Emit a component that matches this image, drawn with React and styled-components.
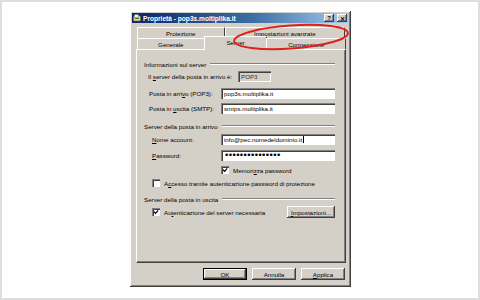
import React from "react";
import styled, { createGlobalStyle, css } from "styled-components";

const Global = createGlobalStyle`
  html, body { margin: 0; padding: 0; background: #fff; }
  body { width: 480px; height: 300px; overflow: hidden; }
`;

const Frame = styled.div`
  position: relative;
  box-sizing: border-box;
  width: 480px;
  height: 300px;
  border: 2px solid #dedede;
  background: #fff;
  display: flex;
  align-items: center;
  justify-content: center;
  font-family: "Liberation Sans", Arial, sans-serif;
  font-size: 6.2px;
  color: #000;
`;

const raised = css`
  box-shadow: inset -1px -1px 0 #404040, inset 1px 1px 0 #ffffff,
    inset -2px -2px 0 #808080;
`;

const sunken = css`
  box-shadow: inset 1px 1px 0 #808080, inset 2px 2px 0 #404040,
    inset -1px -1px 0 #ffffff;
`;

const Dialog = styled.div`
  box-sizing: border-box;
  width: 221px;
  height: 276px;
  margin-top: -2px;
  margin-left: 1px;
  padding: 2px;
  background: #d4d0c8;
  display: flex;
  flex-direction: column;
  ${raised}
`;

const TitleBar = styled.div`
  height: 10px;
  display: flex;
  align-items: center;
  padding: 0 2px 0 1px;
  background: linear-gradient(90deg, #0a246a 0%, #3a6ea5 55%, #a6caf0 100%);
  color: #fff;
  font-weight: bold;
  font-size: 6.6px;
  gap: 2px;
`;

const Title = styled.span`
  flex: 1;
  white-space: nowrap;
`;

const CaptionButton = styled.div`
  box-sizing: border-box;
  width: 10px;
  height: 8px;
  background: #d4d0c8;
  color: #000;
  display: flex;
  align-items: center;
  justify-content: center;
  font-size: 6px;
  font-weight: bold;
  margin-left: ${(p) => (p.$gap ? "1px" : "0")};
  ${raised}
`;

const Body = styled.div`
  flex: 1;
  display: flex;
  flex-direction: column;
  padding: 4px 3px 5px 4px;
`;

const TabRow = styled.div`
  display: flex;
  height: 11px;
  padding: 0 ${(p) => p.$pad || 0}px 0 1px;
  position: relative;
  z-index: ${(p) => (p.$front ? 2 : 1)};
`;

const Tab = styled.div`
  box-sizing: border-box;
  width: ${(p) => p.$w}px;
  display: flex;
  align-items: center;
  justify-content: center;
  background: #d4d0c8;
  border-top: 1px solid #fff;
  border-left: 1px solid #fff;
  border-right: 1px solid #404040;
  border-top-left-radius: 1px;
  border-top-right-radius: 1px;
  white-space: nowrap;
  ${(p) =>
    p.$selected &&
    css`
      margin-top: -2px;
      height: 14px;
      margin-left: -1px;
      margin-right: -1px;
      width: ${p.$w + 2}px;
      padding-bottom: 2px;
    `}
`;

const Panel = styled.div`
  box-sizing: border-box;
  height: 214px;
  border-top: 1px solid #fff;
  border-left: 1px solid #fff;
  border-right: 1px solid #404040;
  border-bottom: 1px solid #404040;
  box-shadow: inset -1px -1px 0 #808080;
  padding: 0 10px 0 7px;
  display: flex;
  flex-direction: column;
`;

const Row = styled.div`
  display: flex;
  align-items: center;
  height: ${(p) => p.$h || 12}px;
  margin-top: ${(p) => p.$mt || 0}px;
  padding-left: ${(p) => p.$indent || 0}px;
  white-space: nowrap;
`;

const GroupTitle = styled(Row)`
  &::after {
    content: "";
    flex: 1;
    margin-left: 4px;
    height: 0;
    border-top: 1px solid #808080;
    border-bottom: 1px solid #fff;
  }
`;

const Label = styled.span`
  width: ${(p) => p.$w}px;
  flex: none;
`;

const Field = styled.div`
  box-sizing: border-box;
  height: 11px;
  width: ${(p) => (p.$w ? `${p.$w}px` : "auto")};
  flex: ${(p) => (p.$w ? "none" : 1)};
  background: ${(p) => (p.$disabled ? "#d4d0c8" : "#fff")};
  padding: 0 3px;
  display: flex;
  align-items: center;
  color: ${(p) => (p.$disabled ? "#303030" : "#000")};
  ${sunken}
`;

const Dots = styled.span`
  font-family: "DejaVu Sans", sans-serif;
  font-size: 9px;
  letter-spacing: -1.6px;
  line-height: 1;
  margin-top: 1px;
`;

const Caret = styled.span`
  display: inline-block;
  width: 1px;
  height: 7px;
  background: #000;
  margin-left: 1px;
`;

const Box = styled.span`
  box-sizing: border-box;
  width: 8px;
  height: 8px;
  flex: none;
  background: #fff;
  margin-right: 4px;
  display: flex;
  align-items: center;
  justify-content: center;
  ${sunken}
`;

const PushButton = styled.div`
  box-sizing: border-box;
  width: ${(p) => p.$w || 44}px;
  height: ${(p) => p.$h || 12}px;
  background: #d4d0c8;
  display: flex;
  align-items: center;
  justify-content: center;
  ${raised}
  ${(p) =>
    p.$default &&
    css`
      border: 1px solid #000;
    `}
`;

const Spacer = styled.div`
  flex: 1;
`;

const ButtonBar = styled.div`
  display: flex;
  justify-content: flex-end;
  gap: 5px;
  margin-top: 5px;
  padding-right: 1px;
`;

const Ellipse = styled.svg`
  position: absolute;
  left: 228px;
  top: 20px;
  z-index: 10;
  overflow: visible;
  pointer-events: none;
`;

const Check = () => (
  <svg width="6" height="6" viewBox="0 0 7 7">
    <path d="M1 3 L3 5 L6 1.5" stroke="#000" strokeWidth="1.4" fill="none" />
  </svg>
);

const CheckBox = ({ checked, children }) => (
  <>
    <Box>{checked && <Check />}</Box>
    <span>{children}</span>
  </>
);

const AppIcon = () => (
  <svg width="8" height="8" viewBox="0 0 8 8">
    <rect x="0.5" y="2" width="7" height="5" fill="#e8d68a" stroke="#6b5a1e" strokeWidth="0.6" />
    <rect x="1.5" y="0.5" width="4" height="3" fill="#f4f4f4" stroke="#666" strokeWidth="0.5" />
    <rect x="2" y="4" width="4" height="1" fill="#3a7a3a" />
  </svg>
);

export default function App() {
  return (
    <>
      <Global />
      <Frame>
        <Dialog>
          <TitleBar>
            <AppIcon />
            <Title>Proprietà - pop3s.moltiplika.it</Title>
            <CaptionButton>?</CaptionButton>
            <CaptionButton $gap>✕</CaptionButton>
          </TitleBar>
          <Body>
            <TabRow $pad={1}>
              <Tab $w={88}>Protezione</Tab>
              <Tab $w={121}>Impostazioni avanzate</Tab>
            </TabRow>
            <TabRow $front>
              <Tab $w={68}>Generale</Tab>
              <Tab $w={62} $selected>
                Server
              </Tab>
              <Tab $w={80}>Connessione</Tab>
            </TabRow>
            <Panel>
              <GroupTitle $h={10} $mt={9}>
                Informazioni sul server
              </GroupTitle>
              <Row $mt={1} $indent={4}>
                <Label $w={90}>
                  Il <u>s</u>erver della posta in arrivo è:
                </Label>
                <Field $w={33} $disabled>
                  POP3
                </Field>
              </Row>
              <Row $mt={5} $indent={5}>
                <Label $w={72}>
                  Posta in arri<u>v</u>o (POP3):
                </Label>
                <Field>pop3s.moltiplika.it</Field>
              </Row>
              <Row $mt={3} $indent={5}>
                <Label $w={72}>
                  Posta in <u>u</u>scita (SMTP):
                </Label>
                <Field>smtps.moltiplika.it</Field>
              </Row>
              <GroupTitle $h={10} $mt={7}>
                Server della posta in arrivo
              </GroupTitle>
              <Row $mt={2} $indent={8}>
                <Label $w={69}>
                  <u>N</u>ome account:
                </Label>
                <Field>
                  info@pec.nomedeldominio.it
                  <Caret />
                </Field>
              </Row>
              <Row $mt={4} $indent={8}>
                <Label $w={69}>
                  <u>P</u>assword:
                </Label>
                <Field>
                  <Dots>•••••••••••••••</Dots>
                </Field>
              </Row>
              <Row $mt={3} $indent={8}>
                <Label $w={69} />
                <CheckBox checked>
                  Memori<u>z</u>za password
                </CheckBox>
              </Row>
              <Row $mt={1} $indent={8}>
                <CheckBox>
                  A<u>c</u>cesso tramite autenticazione password di protezione
                </CheckBox>
              </Row>
              <GroupTitle $h={10} $mt={5}>
                Server della posta in uscita
              </GroupTitle>
              <Row $mt={2} $indent={8}>
                <CheckBox checked>
                  Au<u>t</u>enticazione del server necessaria
                </CheckBox>
                <Spacer />
                <PushButton $w={48} $h={12}>
                  <u>I</u>mpostazioni...
                </PushButton>
              </Row>
            </Panel>
            <ButtonBar>
              <PushButton $default>OK</PushButton>
              <PushButton>Annulla</PushButton>
              <PushButton>
                <u>A</u>pplica
              </PushButton>
            </ButtonBar>
          </Body>
        </Dialog>
        <Ellipse width="122" height="30" viewBox="0 0 122 30">
          <ellipse
            cx="61"
            cy="15"
            rx="57"
            ry="11.5"
            transform="rotate(-4 61 15)"
            fill="none"
            stroke="#e0201c"
            strokeWidth="2"
          />
        </Ellipse>
      </Frame>
    </>
  );
}
